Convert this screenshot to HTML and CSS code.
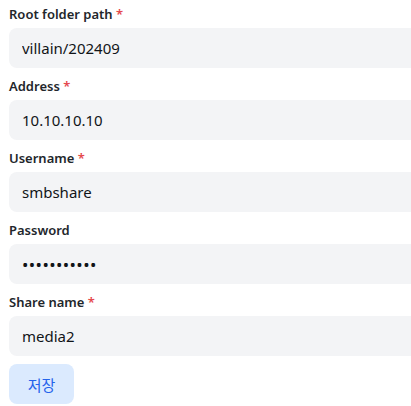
FILE: index.html
```html
<!DOCTYPE html>
<html>
<head lang="ko">
    <meta charset="UTF-8">
    <title>SMB share settings</title>
    <link rel="stylesheet" href="styles.css">
</head>
<body>
    <form class="shareform">
        <div class="field">
            <label>Root folder path <span class="req">*</span></label>
            <input type="text" value="villain/202409">
        </div>
        <div class="field">
            <label>Address <span class="req">*</span></label>
            <input type="text" value="10.10.10.10">
        </div>
        <div class="field">
            <label>Username <span class="req">*</span></label>
            <input type="text" value="smbshare">
        </div>
        <div class="field">
            <label>Password</label>
            <input type="password" class="pw" value="password123">
        </div>
        <div class="field">
            <label>Share name <span class="req">*</span></label>
            <input type="text" value="media2">
        </div>
        <button type="button" class="savebtn">저장</button>
    </form>
</body>
</html>
```

FILE: styles.css
```css
html, body {
    margin: 0;
    overflow: hidden;
}
body {
    font-family: "Noto Sans", "Noto Sans CJK KR", sans-serif;
    color: #1b1f24;
    background-color: #fff;
}
.shareform {
    padding: 4px 0 0 9px;
    width: 430px;
}
.field {
    margin-bottom: 8px;
}
.field label {
    display: block;
    height: 20px;
    line-height: 20px;
    margin-bottom: 4px;
    font-size: 13px;
    font-weight: 600;
    color: #22262b;
}
.req {
    color: #e5484d;
}
.field input {
    box-sizing: border-box;
    display: block;
    width: 100%;
    height: 40px;
    padding: 0 13px;
    border: none;
    border-radius: 8px;
    background-color: #f3f4f6;
    font-family: inherit;
    font-size: 15px;
    color: #111418;
    outline: none;
}
.field input.pw {
    font-size: 17px;
    letter-spacing: 0.4px;
}
.savebtn {
    height: 40px;
    width: 65px;
    border: none;
    border-radius: 8px;
    background-color: #dbeafe;
    color: #2563eb;
    font-family: "Noto Sans CJK KR", sans-serif;
    font-size: 15px;
    cursor: pointer;
}
```
